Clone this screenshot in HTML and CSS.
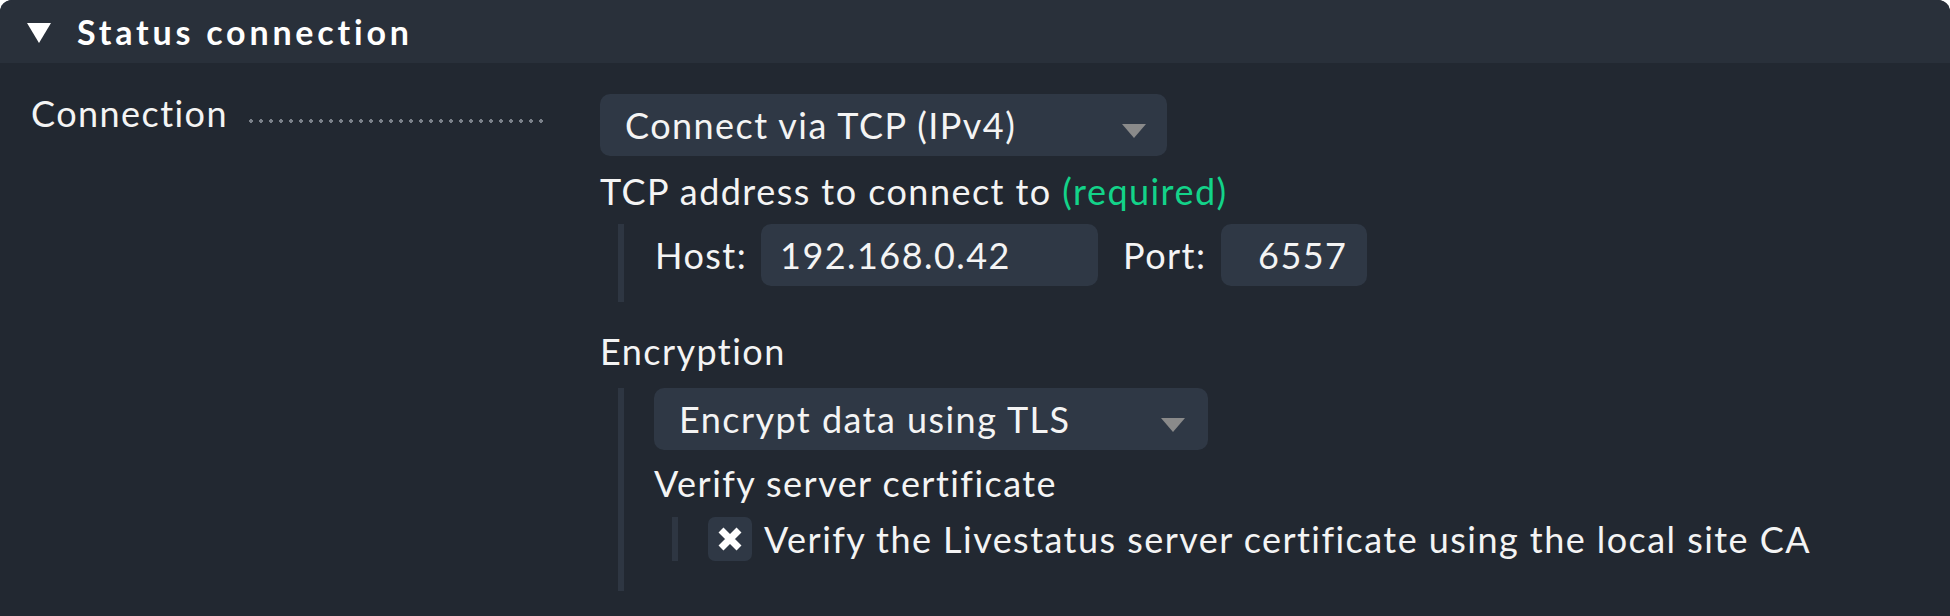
FILE: index.html
```html
<!DOCTYPE html>
<html>
<head>
<meta charset="utf-8">
<link rel="stylesheet" href="styles.css">
</head>
<body>
<div class="panel">
  <div class="head">
    <span class="tri"></span>
    <span class="title">Status connection</span>
  </div>
  <div class="body">
    <div class="label-col">
      <span class="label-text">Connection</span>
      <span class="dots"></span>
    </div>
    <div class="content">
      <div class="select sel-conn">
        <span>Connect via TCP (IPv4)</span>
        <span class="arrow"></span>
      </div>
      <div class="line tcp">TCP address to connect to <span class="req">(required)</span></div>
      <div class="indent host-block">
        <div class="host-row">
          <span class="fld-label">Host:</span>
          <div class="input host-input">192.168.0.42</div>
          <span class="fld-label port-label">Port:</span>
          <div class="input port-input">6557</div>
        </div>
      </div>
      <div class="line enc">Encryption</div>
      <div class="indent enc-block">
        <div class="select sel-tls">
          <span>Encrypt data using TLS</span>
          <span class="arrow"></span>
        </div>
        <div class="line verify">Verify server certificate</div>
        <div class="indent inner">
          <div class="check-row">
            <span class="checkbox">
              <svg class="xmark" width="26" height="26" viewBox="0 0 26 26">
                <path d="M4 4 L22 22 M22 4 L4 22" stroke="#ffffff" stroke-width="7" stroke-linecap="butt" fill="none"/>
              </svg>
            </span>
            <span class="check-label">Verify the Livestatus server certificate using the local site CA</span>
          </div>
        </div>
      </div>
    </div>
  </div>
</div>
</body>
</html>
```

FILE: styles.css
```css
html, body {
  margin: 0;
  padding: 0;
  background: #ffffff;
}

body {
  font-family: Lato, "Open Sans", sans-serif;
  color: #f4f4f4;
  font-size: 36px;
  letter-spacing: 1.45px;
}

.panel {
  width: 1950px;
  height: 616px;
  background: #222831;
  border-radius: 12px 12px 0 0;
  overflow: hidden;
}

.head {
  height: 63px;
  background: #29303a;
  display: flex;
  align-items: center;
  padding-left: 27px;
  box-sizing: border-box;
}

.tri {
  width: 0;
  height: 0;
  border-left: 12px solid transparent;
  border-right: 12px solid transparent;
  border-top: 20px solid #ffffff;
  margin-right: 26px;
  margin-top: 2px;
}

.title {
  font-weight: bold;
  font-size: 34px;
  letter-spacing: 3.8px;
  color: #ffffff;
}

.body {
  display: flex;
}

.label-col {
  width: 600px;
  flex: none;
  display: flex;
  align-items: flex-end;
  height: 44px;
  margin-top: 28px;
  padding-left: 31px;
  padding-right: 55px;
  box-sizing: border-box;
}

.label-text {
  line-height: 44px;
  height: 44px;
}

.dots {
  flex: 1;
  height: 4px;
  margin-left: 18px;
  margin-bottom: 12px;
  background-image: radial-gradient(circle, #7a8089 1.6px, transparent 2px);
  background-size: 10px 4px;
  background-repeat: repeat-x;
}

.content {
  padding-top: 31px;
  display: flex;
  flex-direction: column;
  align-items: flex-start;
}

.select {
  height: 62px;
  background: #2f3845;
  border-radius: 10px;
  display: flex;
  align-items: center;
  justify-content: space-between;
  box-sizing: border-box;
  padding-left: 25px;
  line-height: 44px;
}

.sel-conn {
  width: 567px;
  padding-right: 21px;
}

.sel-tls {
  width: 554px;
  padding-right: 23px;
}

.arrow {
  width: 0;
  height: 0;
  border-left: 12px solid transparent;
  border-right: 12px solid transparent;
  border-top: 14px solid #8a8a8a;
  margin-top: 12px;
}

.line {
  line-height: 44px;
}

.tcp {
  margin-top: 13px;
}

.req {
  color: #13d389;
}

.indent {
  border-left: 6px solid #2e3642;
  margin-left: 18px;
  padding-left: 30px;
}

.host-block {
  margin-top: 11px;
  padding-bottom: 16px;
}

.host-row {
  display: flex;
  align-items: center;
  height: 62px;
}

.fld-label {
  margin-left: 1px;
}

.input {
  height: 62px;
  background: #2f3845;
  border-radius: 10px;
  box-sizing: border-box;
  display: flex;
  align-items: center;
}

.host-input {
  width: 337px;
  margin-left: 14px;
  padding-left: 19px;
}

.port-label {
  margin-left: 25px;
}

.port-input {
  width: 146px;
  margin-left: 15px;
  justify-content: flex-end;
  padding-right: 20px;
}

.enc {
  margin-top: 27px;
}

.enc-block {
  margin-top: 15px;
  padding-bottom: 30px;
  display: flex;
  flex-direction: column;
  align-items: flex-start;
}

.verify {
  margin-top: 11px;
}

.inner {
  margin-top: 12px;
  padding-left: 30px;
}

.check-row {
  display: flex;
  align-items: center;
  height: 44px;
}

.checkbox {
  width: 44px;
  height: 44px;
  background: #2f3845;
  border-radius: 7px;
  display: flex;
  align-items: center;
  justify-content: center;
}

.check-label {
  margin-left: 12px;
}
```
